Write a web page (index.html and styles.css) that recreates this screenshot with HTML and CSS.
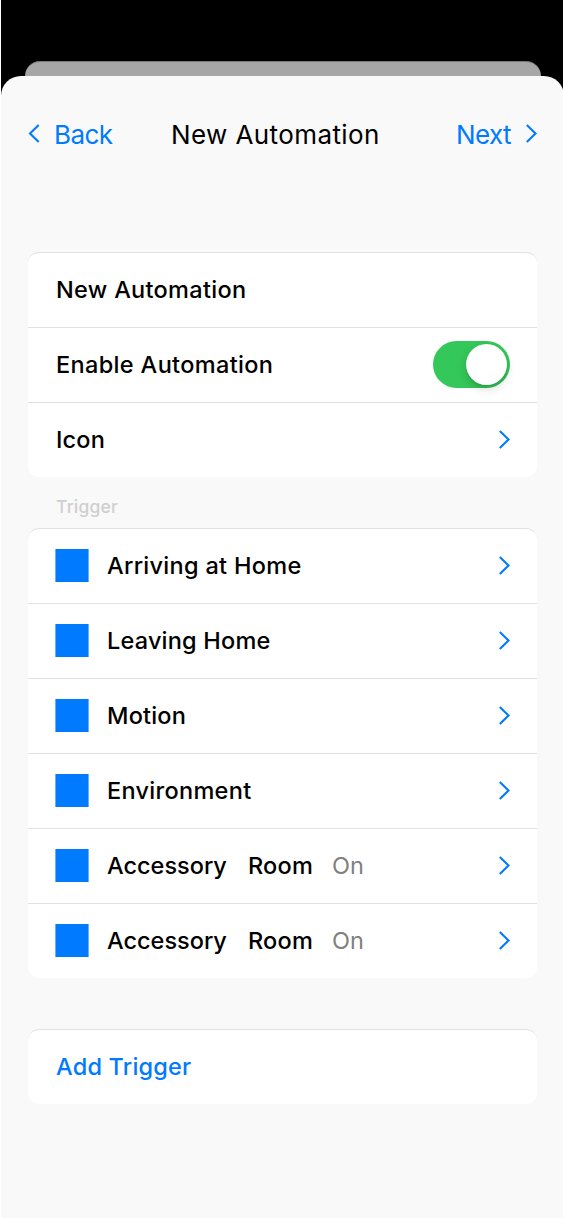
FILE: index.html
```html
<!DOCTYPE html>
<html lang="en">
<head>
<meta charset="utf-8">
<title>New Automation</title>
<link rel="stylesheet" href="styles.css">
</head>
<body>
<div class="screen">
  <div class="previous-sheet"></div>
  <main class="sheet">
    <header class="nav">
      <a class="nav-back"><svg class="nav-chevron" viewBox="0 0 12 20"><path d="M10.700 2 2 10.500l8.700 8.500"/></svg><span>Back</span></a>
      <h1 class="nav-title">New Automation</h1>
      <a class="nav-next"><span>Next</span><svg class="nav-chevron" viewBox="0 0 12 20"><path d="M1.800 2 10.500 10.500l-8.700 8.500"/></svg></a>
    </header>
    <section class="card settings">
      <div class="row"><span class="label title-label">New Automation</span></div>
      <div class="row"><span class="label enable-label">Enable Automation</span><span class="toggle"><span class="knob"></span></span></div>
      <div class="row"><span class="label">Icon</span><svg class="chevron" viewBox="0 0 12 20"><path d="M1.800 2 10.500 10.500l-8.700 8.500"/></svg></div>
    </section>
    <h2 class="caption">Trigger</h2>
    <section class="card">
      <div class="row"><i class="tile"></i><span class="label title-label">Arriving at Home</span><svg class="chevron" viewBox="0 0 12 20"><path d="M1.800 2 10.500 10.500l-8.700 8.500"/></svg></div>
      <div class="row"><i class="tile"></i><span class="label">Leaving Home</span><svg class="chevron" viewBox="0 0 12 20"><path d="M1.800 2 10.500 10.500l-8.700 8.500"/></svg></div>
      <div class="row"><i class="tile"></i><span class="label">Motion</span><svg class="chevron" viewBox="0 0 12 20"><path d="M1.800 2 10.500 10.500l-8.700 8.500"/></svg></div>
      <div class="row"><i class="tile"></i><span class="label title-label">Environment</span><svg class="chevron" viewBox="0 0 12 20"><path d="M1.800 2 10.500 10.500l-8.700 8.500"/></svg></div>
      <div class="row"><i class="tile"></i><span class="label accessory">Accessory</span><span class="label room">Room</span><span class="state">On</span><svg class="chevron" viewBox="0 0 12 20"><path d="M1.800 2 10.500 10.500l-8.700 8.500"/></svg></div>
      <div class="row"><i class="tile"></i><span class="label accessory">Accessory</span><span class="label room">Room</span><span class="state">On</span><svg class="chevron" viewBox="0 0 12 20"><path d="M1.800 2 10.500 10.500l-8.700 8.500"/></svg></div>
    </section>
    <section class="card add-card">
      <div class="row"><a class="label add">Add Trigger</a></div>
    </section>
  </main>
</div>
</body>
</html>
```
FILE: styles.css
```css
* { box-sizing: border-box; }
body { margin: 0; background: #fff; font-family: Inter, "Liberation Sans", sans-serif; color: #000; }
.screen {
  height: 1218px;
  margin-left: 1px;
  padding-top: 61px;
  overflow: hidden;
  background: linear-gradient(#000 0 110px, #f9f9f9 110px);
}
.previous-sheet {
  width: 516px;
  height: 30px;
  margin-left: 24px;
  border-radius: 15px 15px 0 0;
  border-top: 1px solid #777;
  background: #a6a6a6;
}
.sheet {
  width: 563px;
  height: 1142px;
  margin-top: -15px;
  padding: 39px 0 0 27px;
  border-radius: 20px 20px 0 0;
  background: #f9f9f9;
}
.nav {
  display: grid;
  grid-template-columns: 143px 1fr 81px;
  align-items: center;
  width: 509px;
  height: 39px;
  font-size: 26px;
}
.nav-title { margin: 0; font-size: 26px; font-weight: 400; letter-spacing: .4px; }
.nav-back, .nav-next { display: flex; align-items: center; color: #007aff; }
.nav-back { gap: 14px; letter-spacing: -.6px; }
.nav-next { justify-content: space-between; letter-spacing: -.6px; }
.nav-chevron, .chevron { width: 12px; height: 20px; fill: none; stroke: #007aff; stroke-width: 2.1; }
.nav-chevron { margin-bottom: 3px; }
.card {
  width: 509px;
  overflow: hidden;
  border-radius: 11px;
  border-top: 1px solid #e2e2e2;
  background: #fff;
}
.settings { margin-top: 98px; }
.row { display: flex; align-items: center; height: 75px; padding: 0 27px 1px 28px; }
.row:first-child { height: 74px; }
.row + .row { border-top: 1px solid #e2e2e2; }
.label { font-size: 23.500px; font-weight: 480; letter-spacing: .2px; white-space: nowrap; }
.title-label { letter-spacing: .3px; }
.enable-label { letter-spacing: .35px; }
.chevron { margin: 0 0 2px auto; }
.toggle {
  width: 77px;
  height: 47px;
  margin-left: auto;
  padding: 3px;
  border-radius: 24px;
  background: #34c759;
}
.knob {
  display: block;
  width: 41px;
  height: 41px;
  margin-left: 30px;
  border-radius: 50%;
  background: #fff;
  box-shadow: 0 4px 10px rgba(0,0,0,.15), 0 3px 2px rgba(0,0,0,.06);
}
.caption {
  display: flex;
  align-items: center;
  height: 51px;
  margin: 0;
  padding: 8px 28px 0;
  font-size: 17.500px;
  font-weight: 480;
  letter-spacing: .2px;
  color: #cfcfcf;
}
.tile {
  width: 34px;
  height: 33px;
  margin: 0 18px 0 -1px;
  border: solid rgba(0,122,255,.6);
  border-width: 0 1px;
  background: #007aff padding-box;
}
.accessory { width: 141px; letter-spacing: 0; }
.room { width: 84px; }
.state { font-size: 23.500px; color: #808080; }
.add-card { margin-top: 51px; }
.add { color: #007aff; }
```
